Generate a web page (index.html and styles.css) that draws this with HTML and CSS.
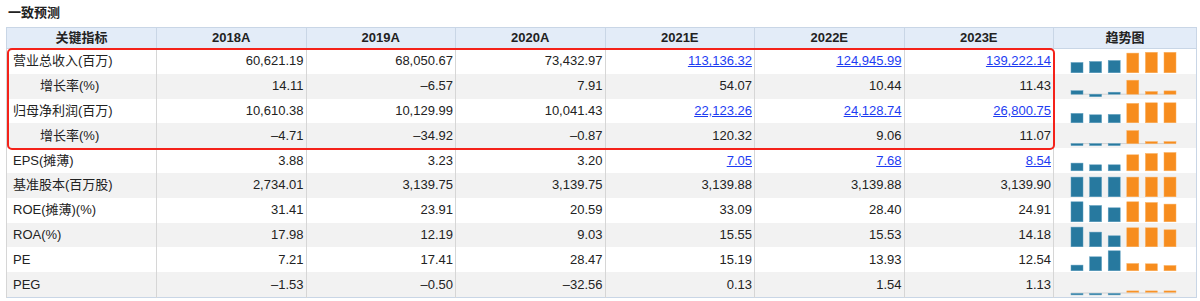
FILE: index.html
```html
<!DOCTYPE html>
<html lang="zh-CN">
<head>
<meta charset="utf-8">
<title>一致预测</title>
<link rel="stylesheet" href="styles.css">
</head>
<body>
<div class="page">
  <h2 class="title">一致预测</h2>
  <div class="wrap">
    <table class="fc">
      <colgroup>
        <col class="c-name"><col class="c-num"><col class="c-num"><col class="c-num"><col class="c-num"><col class="c-num"><col class="c-num"><col class="c-trend">
      </colgroup>
      <thead>
        <tr><th>关键指标</th><th>2018A</th><th>2019A</th><th>2020A</th><th>2021E</th><th>2022E</th><th>2023E</th><th>趋势图</th></tr>
      </thead>
      <tbody>
        <tr>
          <td class="lbl">营业总收入(百万)</td><td>60,621.19</td><td>68,050.67</td><td>73,432.97</td>
          <td><a href="#">113,136.32</a></td><td><a href="#">124,945.99</a></td><td><a href="#">139,222.14</a></td>
          <td class="trend"><svg width="142" height="24" viewBox="0 0 142 24">
            <rect class="b" x="17" y="13.5" width="12" height="10.3"/><rect class="b" x="35.6" y="12.5" width="12" height="11.3"/><rect class="b" x="54.2" y="11.5" width="12" height="12.3"/>
            <rect class="o" x="72.8" y="4.1" width="12" height="19.7"/><rect class="o" x="91.4" y="3.3" width="12" height="20.5"/><rect class="o" x="110" y="3.3" width="12" height="20.5"/>
          </svg></td>
        </tr>
        <tr>
          <td class="lbl sub">增长率(%)</td><td>14.11</td><td>–6.57</td><td>7.91</td><td>54.07</td><td>10.44</td><td>11.43</td>
          <td class="trend"><svg width="142" height="24" viewBox="0 0 142 24">
            <line class="axis" x1="17" y1="20.2" x2="122" y2="20.2"/>
            <rect class="b" x="17" y="16.7" width="12" height="3.5"/><rect class="b" x="35.6" y="20.2" width="12" height="2.5"/><rect class="b" x="54.2" y="18.2" width="12" height="2"/>
            <rect class="o" x="72.8" y="6.2" width="12" height="14"/><rect class="o" x="91.4" y="17.5" width="12" height="2.7"/><rect class="o" x="110" y="16.9" width="12" height="3.3"/>
          </svg></td>
        </tr>
        <tr>
          <td class="lbl">归母净利润(百万)</td><td>10,610.38</td><td>10,129.99</td><td>10,041.43</td>
          <td><a href="#">22,123.26</a></td><td><a href="#">24,128.74</a></td><td><a href="#">26,800.75</a></td>
          <td class="trend"><svg width="142" height="24" viewBox="0 0 142 24">
            <rect class="b" x="17" y="14.4" width="12" height="9.4"/><rect class="b" x="35.6" y="15.8" width="12" height="8"/><rect class="b" x="54.2" y="15.4" width="12" height="8.4"/>
            <rect class="o" x="72.8" y="4.4" width="12" height="19.4"/><rect class="o" x="91.4" y="3.8" width="12" height="20"/><rect class="o" x="110" y="3.8" width="12" height="20"/>
          </svg></td>
        </tr>
        <tr>
          <td class="lbl sub">增长率(%)</td><td>–4.71</td><td>–34.92</td><td>–0.87</td><td>120.32</td><td>9.06</td><td>11.07</td>
          <td class="trend"><svg width="142" height="24" viewBox="0 0 142 24">
            <line class="axis" x1="17" y1="20.6" x2="122" y2="20.6"/>
            <rect class="b" x="17" y="20.6" width="12" height="2"/><rect class="b" x="35.6" y="20.6" width="12" height="2"/><rect class="b" x="54.2" y="20.6" width="12" height="2"/>
            <rect class="o" x="72.8" y="7.6" width="12" height="13"/><rect class="o" x="91.4" y="18.6" width="12" height="2"/><rect class="o" x="110" y="18.6" width="12" height="2"/>
          </svg></td>
        </tr>
        <tr>
          <td class="lbl">EPS(摊薄)</td><td>3.88</td><td>3.23</td><td>3.20</td>
          <td><a href="#">7.05</a></td><td><a href="#">7.68</a></td><td><a href="#">8.54</a></td>
          <td class="trend"><svg width="142" height="24" viewBox="0 0 142 24">
            <rect class="b" x="17" y="15.1" width="12" height="7.7"/><rect class="b" x="35.6" y="16.8" width="12" height="6"/><rect class="b" x="54.2" y="16.8" width="12" height="6"/>
            <rect class="o" x="72.8" y="6.8" width="12" height="16"/><rect class="o" x="91.4" y="5.5" width="12" height="17.3"/><rect class="o" x="110" y="4.5" width="12" height="18.3"/>
          </svg></td>
        </tr>
        <tr>
          <td class="lbl">基准股本(百万股)</td><td>2,734.01</td><td>3,139.75</td><td>3,139.75</td><td>3,139.88</td><td>3,139.88</td><td>3,139.90</td>
          <td class="trend"><svg width="142" height="24" viewBox="0 0 142 24">
            <rect class="b" x="17" y="4.1" width="12" height="19.7"/><rect class="b" x="35.6" y="4.1" width="12" height="19.7"/><rect class="b" x="54.2" y="4.1" width="12" height="19.7"/>
            <rect class="o" x="72.8" y="4.1" width="12" height="19.7"/><rect class="o" x="91.4" y="4.1" width="12" height="19.7"/><rect class="o" x="110" y="4.1" width="12" height="19.7"/>
          </svg></td>
        </tr>
        <tr>
          <td class="lbl">ROE(摊薄)(%)</td><td>31.41</td><td>23.91</td><td>20.59</td><td>33.09</td><td>28.40</td><td>24.91</td>
          <td class="trend"><svg width="142" height="24" viewBox="0 0 142 24">
            <rect class="b" x="17" y="3.8" width="12" height="20"/><rect class="b" x="35.6" y="7.5" width="12" height="16.3"/><rect class="b" x="54.2" y="9.8" width="12" height="14"/>
            <rect class="o" x="72.8" y="3.8" width="12" height="20"/><rect class="o" x="91.4" y="4.5" width="12" height="19.3"/><rect class="o" x="110" y="6.1" width="12" height="17.7"/>
          </svg></td>
        </tr>
        <tr>
          <td class="lbl">ROA(%)</td><td>17.98</td><td>12.19</td><td>9.03</td><td>15.55</td><td>15.53</td><td>14.18</td>
          <td class="trend"><svg width="142" height="24" viewBox="0 0 142 24">
            <rect class="b" x="17" y="4.1" width="12" height="19.7"/><rect class="b" x="35.6" y="9.1" width="12" height="14.7"/><rect class="b" x="54.2" y="12.8" width="12" height="11"/>
            <rect class="o" x="72.8" y="4.8" width="12" height="19"/><rect class="o" x="91.4" y="4.8" width="12" height="19"/><rect class="o" x="110" y="6.8" width="12" height="17"/>
          </svg></td>
        </tr>
        <tr>
          <td class="lbl">PE</td><td>7.21</td><td>17.41</td><td>28.47</td><td>15.19</td><td>13.93</td><td>12.54</td>
          <td class="trend"><svg width="142" height="24" viewBox="0 0 142 24">
            <rect class="b" x="17" y="18.1" width="12" height="5.7"/><rect class="b" x="35.6" y="9.8" width="12" height="14"/><rect class="b" x="54.2" y="3.8" width="12" height="20"/>
            <rect class="o" x="72.8" y="16.5" width="12" height="7.3"/><rect class="o" x="91.4" y="16.8" width="12" height="7"/><rect class="o" x="110" y="18.5" width="12" height="5.3"/>
          </svg></td>
        </tr>
        <tr>
          <td class="lbl">PEG</td><td>–1.53</td><td>–0.50</td><td>–32.56</td><td>0.13</td><td>1.54</td><td>1.13</td>
          <td class="trend"><svg width="142" height="24" viewBox="0 0 142 24">
            <line class="axis" x1="17" y1="21" x2="122" y2="21"/>
            <rect class="b" x="17" y="21.4" width="12" height="1.5"/><rect class="b" x="35.6" y="21.4" width="12" height="1.5"/><rect class="b" x="54.2" y="21.4" width="12" height="1.5"/>
            <rect class="o" x="72.8" y="18.9" width="12" height="1.4"/><rect class="o" x="91.4" y="18.9" width="12" height="1.4"/><rect class="o" x="110" y="18.9" width="12" height="1.4"/>
          </svg></td>
        </tr>
      </tbody>
    </table>
    <div class="mark"></div>
  </div>
</div>
</body>
</html>
```

FILE: styles.css
```css
html, body {
  margin: 0;
  padding: 0;
  background: #ffffff;
}

body {
  font-family: "Liberation Sans", Arial, "Noto Sans CJK SC", sans-serif;
  font-size: 13px;
  color: #222222;
}

.page {
  padding: 4px 0 0 0;
}

.title {
  margin: 0 0 5px 8px;
  font-size: 13px;
  font-weight: bold;
  line-height: 18px;
  color: #222222;
}

.wrap {
  position: relative;
  margin-left: 6px;
  width: 1190px;
}

.fc {
  width: 1190px;
  table-layout: fixed;
  border-collapse: collapse;
  border: 1px solid #c9d6e6;
}

.c-name { width: 150px; }
.c-num { width: 149.5px; }
.c-trend { width: 143px; }

.fc th {
  height: 20px;
  padding: 0;
  background: #e3ecf8;
  border: 1px solid #c9d6e6;
  font-weight: bold;
  font-size: 13px;
  line-height: 16px;
  text-align: center;
  color: #222222;
}

.fc td {
  height: 24.8px;
  padding: 0 2px 0 0;
  border-left: 1px solid #d6d6d6;
  border-right: 1px solid #d6d6d6;
  text-align: right;
  line-height: 16px;
  white-space: nowrap;
}

.fc tbody tr:nth-child(even) td {
  background: #f2f2f2;
}

.fc td.lbl {
  text-align: left;
  padding-left: 6px;
}

.fc td.sub {
  padding-left: 33px;
}

.fc td a {
  color: #1d3cf2;
  text-decoration: underline;
}

.fc td.trend {
  padding: 0;
  vertical-align: top;
  border-right: 1px solid #c9d6e6;
}

.trend svg {
  display: block;
}

.trend .b {
  fill: #27799f;
  stroke: #5f9fc0;
  stroke-width: 0.5;
}

.trend .o {
  fill: #f78d1e;
  stroke: #fab060;
  stroke-width: 0.5;
}

.trend .axis {
  stroke: #d2d2d2;
  stroke-width: 1;
}

.mark {
  position: absolute;
  left: 1px;
  top: 21px;
  width: 1048px;
  height: 102px;
  box-sizing: border-box;
  border: 2px solid #f4221a;
  border-radius: 5px;
  pointer-events: none;
}
```
